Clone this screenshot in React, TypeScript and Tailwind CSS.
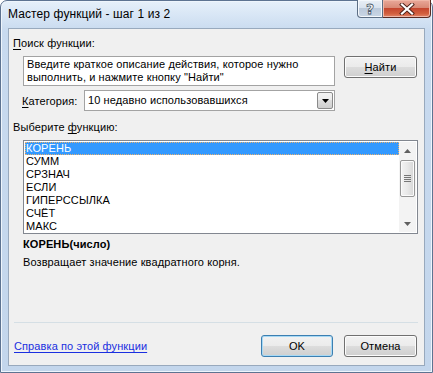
import React from "react";

const font = { fontFamily: '"Liberation Sans", Arial, sans-serif' };

const items = ["КОРЕНЬ", "СУММ", "СРЗНАЧ", "ЕСЛИ", "ГИПЕРССЫЛКА", "СЧЁТ", "МАКС"];

function Btn({ children, focused, className = "" }: { children: React.ReactNode; focused?: boolean; className?: string }) {
  return (
    <div
      className={
        "flex items-center justify-center rounded-[3px] border text-[11px] text-black " +
        (focused
          ? "border-[#3c7fb1] shadow-[inset_0_0_0_1px_#a7d9f5] bg-[linear-gradient(#f2f2f2_0%,#ebebeb_50%,#dddddd_50%,#cfcfcf_100%)] "
          : "border-[#707070] shadow-[inset_0_0_0_1px_#fcfcfc] bg-[linear-gradient(#f2f2f2_0%,#ebebeb_50%,#dddddd_50%,#cfcfcf_100%)] ") +
        className
      }
    >
      {children}
    </div>
  );
}

export default function App() {
  return (
    <div className="w-[433px] h-[373px] bg-white tracking-[0.1px]" style={font}>
      <div className="w-[433px] h-[373px] flex flex-col rounded-t-[7px] border border-[#5d7391] bg-[linear-gradient(180deg,#e6f0fa_0px,#d8e6f5_14px,#c8daef_30px,#c3d6ec_100%)] shadow-[inset_0_0_0_1px_#eef5fc]">
        {/* title bar */}
        <div className="flex h-[27px] shrink-0">
          <div className="pl-[7px] pt-[6px] text-[12px] leading-[15px] text-black">Мастер функций - шаг 1 из 2</div>
          <div className="ml-auto flex h-[18px] mr-[1px] -mt-[1px]">
            <div className="flex w-[26px] h-[18px] items-center justify-center rounded-bl-[4px] border border-[#5c6e84] border-t-0 bg-[linear-gradient(#e9eff6_0%,#d9e3ee_45%,#bccadb_50%,#c9d6e5_100%)] shadow-[inset_0_0_0_1px_#f4f8fc]">
              <span className="text-[14px] font-bold leading-none text-white [-webkit-text-stroke:0.8px_#4a5868]" style={{ fontFamily: '"DejaVu Sans", sans-serif' }}>?</span>
            </div>
            <div className="flex w-[48px] h-[18px] items-center justify-center rounded-br-[4px] border border-l-0 border-t-0 border-[#5a2a22] bg-[linear-gradient(#e9a99a_0%,#d98a76_45%,#c5472f_50%,#d2603f_80%,#e3866a_100%)] shadow-[inset_0_0_0_1px_#f0b8a8]">
              <svg width="16" height="12" viewBox="0 0 16 12">
                <path d="M3 1.5 L13 10.5 M13 1.5 L3 10.5" stroke="#4a2018" strokeWidth="4" strokeLinecap="square" />
                <path d="M3 1.5 L13 10.5 M13 1.5 L3 10.5" stroke="#ffffff" strokeWidth="2.2" strokeLinecap="square" />
              </svg>
            </div>
          </div>
        </div>

        {/* client area */}
        <div className="ml-[7px] w-[417px] h-[338px] shrink-0 border border-[#98a9bd] bg-[#f0f0f0] text-[11px] leading-[14px] text-black flex flex-col">
          <div className="mt-[7px] ml-[4px] h-[14px]">
            <span className="underline underline-offset-2">П</span>оиск функции:
          </div>

          <div className="mt-[6px] flex">
            <div className="ml-[14px] w-[312px] h-[30px] border border-[#a3a3a3] bg-white pl-[3px] pt-[1px] leading-[13px]">
              Введите краткое описание действия, которое нужно выполнить, и нажмите кнопку "Найти"
            </div>
            <Btn className="ml-[9px] w-[73px] h-[22px]">
              <span>
                <span className="underline underline-offset-2">Н</span>айти
              </span>
            </Btn>
          </div>

          <div className="mt-[4px] flex items-center">
            <div className="ml-[13px] w-[62px]">
              <span className="underline underline-offset-2">К</span>атегория:
            </div>
            <div className="flex w-[251px] h-[21px] border border-[#a3a3a3] bg-white">
              <div className="flex-1 pl-[3px] leading-[19px]">10 недавно использовавшихся</div>
              <div className="m-[1px] flex w-[16px] items-center justify-center rounded-[2px] border border-[#8a8a8a] bg-[linear-gradient(#f2f2f2_0%,#ebebeb_50%,#dddddd_50%,#cfcfcf_100%)]">
                <svg width="7" height="4" viewBox="0 0 7 4">
                  <path d="M0 0 H7 L3.5 4 Z" fill="#000" />
                </svg>
              </div>
            </div>
          </div>

          <div className="mt-[9px] ml-[4px] h-[14px]">
            Выберите <span className="underline underline-offset-2">ф</span>ункцию:
          </div>

          <div className="mt-[6px] ml-[14px] flex w-[395px] h-[94px] border border-[#828790] bg-white p-[1px]">
            <div className="flex-1 flex flex-col">
              {items.map((it, i) => (
                <div
                  key={it}
                  className={
                    "h-[13px] pl-[1px] leading-[13px] " +
                    (i === 0 ? "bg-[#3399ff] text-white outline outline-1 outline-dotted outline-[#e8b070] -outline-offset-1" : "")
                  }
                >
                  {it}
                </div>
              ))}
            </div>
            <div className="flex w-[17px] flex-col items-center bg-[#f3f3f3]">
              <div className="flex h-[17px] w-full items-center justify-center">
                <svg width="7" height="4" viewBox="0 0 7 4">
                  <path d="M0 4 H7 L3.5 0 Z" fill="#606060" />
                </svg>
              </div>
              <div className="mt-[1px] flex w-[15px] h-[37px] flex-col items-center justify-center gap-[1px] rounded-[2px] border border-[#979797] bg-[linear-gradient(90deg,#f3f3f3_0%,#e8e8e8_50%,#d6d6d6_100%)] shadow-[inset_0_0_0_1px_#fbfbfb]">
                <div className="h-[1px] w-[7px] bg-[#767676]" />
                <div className="h-[1px] w-[7px] bg-[#767676]" />
                <div className="h-[1px] w-[7px] bg-[#767676]" />
                <div className="h-[1px] w-[7px] bg-[#767676]" />
              </div>
              <div className="mt-auto flex h-[17px] w-full items-center justify-center">
                <svg width="7" height="4" viewBox="0 0 7 4">
                  <path d="M0 0 H7 L3.5 4 Z" fill="#606060" />
                </svg>
              </div>
            </div>
          </div>

          <div className="mt-[3px] ml-[14px] h-[14px] font-bold">КОРЕНЬ(число)</div>
          <div className="mt-[4px] ml-[14px] h-[14px]">Возвращает значение квадратного корня.</div>

          <div className="mt-[53px] ml-[5px] w-[404px] h-[1px] bg-[#d5dfe5]" />

          <div className="mt-[12px] flex items-center">
            <div className="ml-[5px] w-[247px] text-[#1a2fe0] underline underline-offset-2">Справка по этой функции</div>
            <Btn focused className="w-[72px] h-[22px]">OK</Btn>
            <Btn className="ml-[11px] w-[73px] h-[22px]">Отмена</Btn>
          </div>
        </div>
      </div>
    </div>
  );
}
